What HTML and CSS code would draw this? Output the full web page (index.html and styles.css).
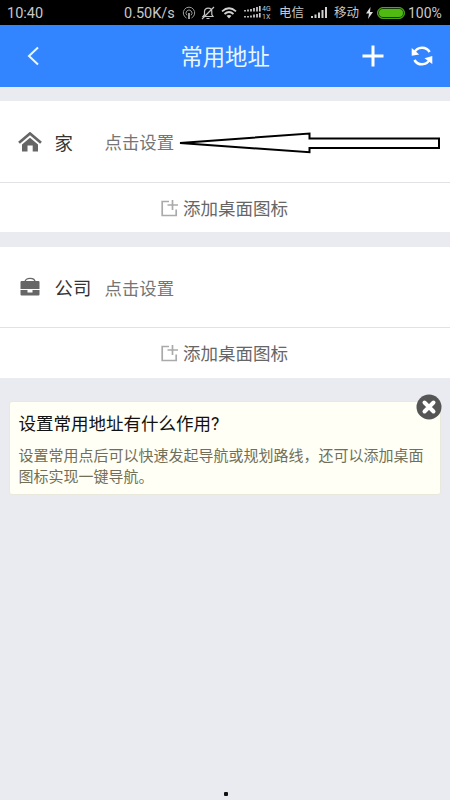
FILE: index.html
```html
<!DOCTYPE html>
<html lang="zh-CN">
<head>
<meta charset="UTF-8">
<title>常用地址</title>
<link rel="stylesheet" href="styles.css">
</head>
<body>
<div class="screen">
  <div class="status">
    <span class="time">10:40</span>
    <span class="speed">0.50K/s</span>
    <svg class="i-spot" width="14" height="14" viewBox="0 0 14 14" fill="none" stroke="#9a9a9a"><path d="M4.5 12A5.7 5.7 0 1 1 9.5 12M5 9.3A3 3 0 1 1 9 9.3"/><path d="M7 7v6" stroke-width="2"/></svg>
    <svg class="i-bell" width="14" height="14" viewBox="0 0 14 14" fill="none" stroke="#c4c4c4" stroke-width="1.2"><path d="M2 10.5h10L10.8 8.500V5.500C10.800 1 3.500 1 3.500 5.500v3zM5.500 12.500h3M1 13L13 1"/></svg>
    <svg class="i-wifi" width="16" height="12" viewBox="0 0 16 12" fill="none" stroke="#d2d2d2" stroke-width="1.7"><path d="M1 4.300Q8-1.800 15 4.300M3.500 7Q8 3 12.500 7"/><path d="M5.500 8.800Q8 7 10.500 8.800L8 11.500z" fill="#d2d2d2" stroke="none"/></svg>
    <svg class="i-dual" width="17" height="13" viewBox="0 0 17 13" fill="none" stroke="#d0d0d0" stroke-width="1.7"><path d="M1 5.500v-1.500M4 5.500v-2M7 5.500V3M10 5.500V2M13 5.500V1M15.800 5.500V0M1 11.500V10M4 11.500V10M7 11.500V9.500M10 11.500V8.500M13 11.500V8M15.800 11.500V7"/></svg>
    <span class="net"><span>4G</span><span>1X</span></span>
    <span class="carrier-a">电信</span>
    <svg class="i-signal" width="16" height="11" viewBox="0 0 16 11" fill="none" stroke="#d0d0d0" stroke-width="2"><path d="M1 11V9M4.500 11V7.500M8 11V5.500M11.500 11V3M15 11V0"/></svg>
    <span class="carrier-b">移动</span>
    <svg class="i-bolt" width="7" height="12" viewBox="0 0 7 12"><path d="M4.500 0L0 6.500h3L2 12l5-7H4z" fill="#ddd"/></svg>
    <span class="battery"></span>
    <span class="percent">100%</span>
  </div>

  <header class="header">
    <svg class="back" width="13" height="20" viewBox="0 0 13 20" fill="none" stroke="#e8f7ff" stroke-width="2"><path d="M11 1.500L2 10l9 8.500"/></svg>
    <h1>常用地址</h1>
    <svg class="plus" width="22" height="22" viewBox="0 0 22 22" stroke="#fff" stroke-width="3"><path d="M11 .5v21M.5 11h21"/></svg>
    <svg class="sync" width="22" height="22" viewBox="0 0 22 22" fill="none" stroke="#fff" stroke-width="2.500"><path d="M3.300 7.500A8.700 8.700 0 0 1 18.600 7M18.700 14.500A8.700 8.700 0 0 1 3.400 15"/><path d="M.7 3v7.700l7.500-1.200zM21.300 19v-8l-7.800 2.200z" fill="#fff" stroke="none"/></svg>
  </header>

  <section class="card">
    <div class="place">
      <svg width="24" height="20" viewBox="0 0 24 20"><path d="M1 10.800L12 1.500l11 9.300" fill="none" stroke="#666" stroke-width="2.700"/><path d="M4 12.500l8-6.800 8 6.800v7h-5.300v-6H9.500v6H4z" fill="#666"/></svg>
      <span class="name">家</span>
      <span class="hint">点击设置</span>
      <svg class="arrow" width="264" height="22" viewBox="0 0 264 22"><path d="M2 11L131.500 1.500V6.500H261V16H131.500V20.300z" fill="#fff" stroke="#000" stroke-width="2"/></svg>
    </div>
    <div class="shortcut">
      <svg width="17" height="17" viewBox="0 0 17 17" fill="none" stroke="#aaa" stroke-width="1.700"><path d="M8 1.500H1.200v14h14V9.500M11.500 0v10M6.500 5H17"/></svg>
      <span>添加桌面图标</span>
    </div>
  </section>

  <section class="card">
    <div class="place">
      <svg width="24" height="20" viewBox="0 0 24 20"><path d="M7 5C7 .2 17 .2 17 5" fill="none" stroke="#666" stroke-width="1.400"/><path d="M3.500 4h17q1 0 1 1V12H2.500V5q0-1 1-1zM2.500 13H9.500v2.500h5V13h7v4.500q0 1-1 1h-17q-1 0-1-1z" fill="#666"/><path d="M10.500 13h3v1.500h-3z" fill="#fff"/></svg>
      <span class="name">公司</span>
      <span class="hint">点击设置</span>
    </div>
    <div class="shortcut">
      <svg width="17" height="17" viewBox="0 0 17 17" fill="none" stroke="#aaa" stroke-width="1.700"><path d="M8 1.500H1.200v14h14V9.500M11.500 0v10M6.500 5H17"/></svg>
      <span>添加桌面图标</span>
    </div>
  </section>

  <aside class="tip">
    <h2>设置常用地址有什么作用?</h2>
    <p>设置常用点后可以快速发起导航或规划路线，还可以添加桌面图标实现一键导航。</p>
    <svg class="close" width="26" height="26" viewBox="0 0 26 26"><circle cx="13" cy="13" r="12.500" fill="#555"/><path d="M8.500 8.500l9 9M17.500 8.500l-9 9" stroke="#fff" stroke-width="4" stroke-linecap="round"/></svg>
  </aside>
  <span class="dot"></span>
</div>
</body>
</html>
```
FILE: styles.css
```css
* { box-sizing: border-box; }
body {
  margin: 0;
  font-family: Roboto, "Noto Sans CJK SC", sans-serif;
}
h1, h2, p { margin: 0; font-weight: 400; }
svg { display: block; flex: none; }
.screen {
  position: relative;
  width: 450px;
  height: 800px;
  overflow: hidden;
  background: #eaebf0;
}
.status {
  display: flex;
  align-items: center;
  height: 25px;
  padding-left: 7px;
  background: #000;
  color: #c8c8c8;
  font-size: 14.5px;
  line-height: 23px;
  white-space: nowrap;
}
.status > * { flex: none; }
.time, .speed, .percent { padding-top: 2px; }
.time { width: 117px; }
.speed { width: 58px; font-size: 14.5px; }
.i-bell { margin-left: 5px; }
.i-wifi { margin-left: 6px; }
.i-dual { margin-left: 7px; }
.net {
  display: flex;
  flex-direction: column;
  width: 12px;
  margin-left: 1px;
  font-size: 7px;
  line-height: 8px;
}
.carrier-a { width: 32px; margin-left: 5px; font-size: 12.5px; }
.carrier-b { width: 32px; margin-left: 7px; font-size: 12.5px; }
.battery {
  width: 28px;
  height: 12px;
  margin-left: 4px;
  border: 1px solid #4da51d;
  border-radius: 6px;
  background: #50b912;
  box-shadow: inset 0 0 0 1px #153906;
}
.percent { margin-left: 3px; font-size: 14px; }
.header {
  display: flex;
  align-items: center;
  height: 62px;
  padding: 0 17px 0 27px;
  background: #3385ff;
}
.header h1 {
  width: 90px;
  margin-left: 140.5px;
  padding-top: 3px;
  color: #e8f7ff;
  font-size: 22.3px;
  line-height: 59px;
  white-space: nowrap;
}
.plus { margin-left: 91.5px; }
.sync { margin-left: 27px; }
.card {
  height: 131px;
  margin-top: 14px;
  background: #fff;
}
.card + .card { margin-top: 15px; }
.place {
  display: flex;
  align-items: center;
  height: 82px;
  padding-left: 17.5px;
  border-bottom: 1px solid #e2e2e4;
  white-space: nowrap;
}
.card + .card .place { height: 81px; }
.name {
  width: 50px;
  margin-left: 13px;
  color: #333;
  font-size: 18.4px;
}
.hint { width: 73.5px; color: #757575; font-size: 17.4px; }
.arrow { margin-top: 2px; }
.shortcut {
  display: flex;
  align-items: center;
  justify-content: center;
  gap: 5px;
  height: 50px;
  padding-right: 1px;
  color: #666;
  font-size: 17.5px;
}
.shortcut span { padding-bottom: 2px; }
.tip {
  position: relative;
  height: 94px;
  margin: 23px 9px 0;
  padding: 9px 9px 0;
  border: 1px solid #e9e8dc;
  border-radius: 3px;
  background: #fffff6;
}
.tip h2 { margin-left: -0.5px; color: #111; font-size: 17.5px; line-height: 26px; }
.tip p {
  width: 410px;
  margin: 9px 0 0 -0.5px;
  color: #716f58;
  font-size: 15px;
  line-height: 20.5px;
}
.close { position: absolute; top: -8px; right: -2px; }
.dot {
  position: absolute;
  left: 224px;
  top: 792px;
  width: 4px;
  height: 4px;
  border-radius: 1px;
  background: #111;
}
```
